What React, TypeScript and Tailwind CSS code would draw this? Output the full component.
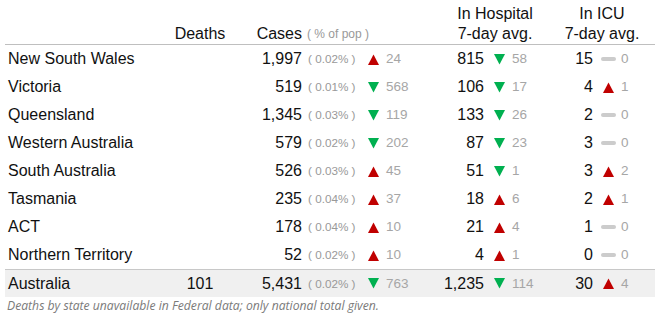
import type { ReactNode } from "react";

type Dir = "up" | "down" | "flat";
type Delta = { dir: Dir; value: number };

type Row = {
  name: string;
  deaths?: string;
  cases: string;
  pct: string;
  casesDelta: Delta;
  hosp: string;
  hospDelta: Delta;
  icu: string;
  icuDelta: Delta;
};

const up = (value: number): Delta => ({ dir: "up", value });
const down = (value: number): Delta => ({ dir: "down", value });
const flat = (value: number): Delta => ({ dir: "flat", value });

const ROWS: Row[] = [
  { name: "New South Wales", cases: "1,997", pct: "0.02%", casesDelta: up(24), hosp: "815", hospDelta: down(58), icu: "15", icuDelta: flat(0) },
  { name: "Victoria", cases: "519", pct: "0.01%", casesDelta: down(568), hosp: "106", hospDelta: down(17), icu: "4", icuDelta: up(1) },
  { name: "Queensland", cases: "1,345", pct: "0.03%", casesDelta: down(119), hosp: "133", hospDelta: down(26), icu: "2", icuDelta: flat(0) },
  { name: "Western Australia", cases: "579", pct: "0.02%", casesDelta: down(202), hosp: "87", hospDelta: down(23), icu: "3", icuDelta: flat(0) },
  { name: "South Australia", cases: "526", pct: "0.03%", casesDelta: up(45), hosp: "51", hospDelta: down(1), icu: "3", icuDelta: up(2) },
  { name: "Tasmania", cases: "235", pct: "0.04%", casesDelta: up(37), hosp: "18", hospDelta: up(6), icu: "2", icuDelta: up(1) },
  { name: "ACT", cases: "178", pct: "0.04%", casesDelta: up(10), hosp: "21", hospDelta: up(4), icu: "1", icuDelta: flat(0) },
  { name: "Northern Territory", cases: "52", pct: "0.02%", casesDelta: up(10), hosp: "4", hospDelta: up(1), icu: "0", icuDelta: flat(0) },
];

const TOTAL: Row = {
  name: "Australia",
  deaths: "101",
  cases: "5,431",
  pct: "0.02%",
  casesDelta: down(763),
  hosp: "1,235",
  hospDelta: down(114),
  icu: "30",
  icuDelta: up(4),
};

function Marker({ dir }: { dir: Dir }) {
  if (dir === "flat") {
    return <span className="block h-[4px] w-[15px] rounded-full bg-[#cccccc]" />;
  }
  return (
    <svg width="11" height="11" viewBox="0 0 11 11">
      {dir === "up" ? (
        <polygon points="5.5,0.5 11,11 0,11" fill="#c00000" />
      ) : (
        <polygon points="0,0 11,0 5.5,10.5" fill="#00b050" />
      )}
    </svg>
  );
}

function DeltaCell({ delta, className }: { delta: Delta; className: string }) {
  return (
    <div className={`flex items-center ${className}`}>
      <span className="flex w-[17px] items-center justify-center">
        <Marker dir={delta.dir} />
      </span>
      <span className="ml-[4px] text-[13.5px] text-[#a6a6a6]">{delta.value}</span>
    </div>
  );
}

function TableRow({ row, total }: { row: Row; total?: boolean }) {
  return (
    <div
      className={`flex h-[28px] items-center ${
        total ? "border-t border-[#c8c8c8] bg-[#f0f0f0]" : ""
      }`}
    >
      <div className="w-[165px] pl-[3px]">{row.name}</div>
      <div className="w-[60px] text-center">{row.deaths}</div>
      <div className="w-[72px] text-right">{row.cases}</div>
      <div className="w-[63px] whitespace-pre pl-[6px] text-[11.7px] text-[#999999]">
        {`( ${row.pct} )`}
      </div>
      <DeltaCell delta={row.casesDelta} className="w-[75px]" />
      <div className="w-[44px] text-right">{row.hosp}</div>
      <DeltaCell delta={row.hospDelta} className="w-[76px] pl-[7px]" />
      <div className="w-[33px] text-right">{row.icu}</div>
      <DeltaCell delta={row.icuDelta} className="w-[62px] pl-[7px]" />
    </div>
  );
}

function HeaderCell({ className, children }: { className: string; children?: ReactNode }) {
  return <div className={className}>{children}</div>;
}

export default function App() {
  return (
    <div className="min-h-screen bg-white px-[5px] font-['Liberation_Sans',Arial,sans-serif] text-[16px] leading-[20px] text-[#111111]">
      <div className="w-[650px]">
        <div className="flex h-[45px] items-end border-b border-[#bfbfbf]">
          <HeaderCell className="w-[165px]" />
          <HeaderCell className="w-[60px] text-center">Deaths</HeaderCell>
          <HeaderCell className="w-[72px] text-right">Cases</HeaderCell>
          <HeaderCell className="w-[138px] whitespace-pre pl-[5px] text-[12px] text-[#999999]">
            {"( % of pop )"}
          </HeaderCell>
          <HeaderCell className="w-[120px] pr-[10px] text-center">
            In Hospital
            <br />
            7-day avg.
          </HeaderCell>
          <HeaderCell className="w-[95px] pr-[11px] text-center">
            In ICU
            <br />
            7-day avg.
          </HeaderCell>
        </div>
        {ROWS.map((row) => (
          <TableRow key={row.name} row={row} />
        ))}
        <TableRow row={TOTAL} total />
        <p className="pl-[2px] font-['Open_Sans',sans-serif] text-[12.2px] italic leading-[18px] text-[#7a7a7a]">
          Deaths by state unavailable in Federal data; only national total given.
        </p>
      </div>
    </div>
  );
}
